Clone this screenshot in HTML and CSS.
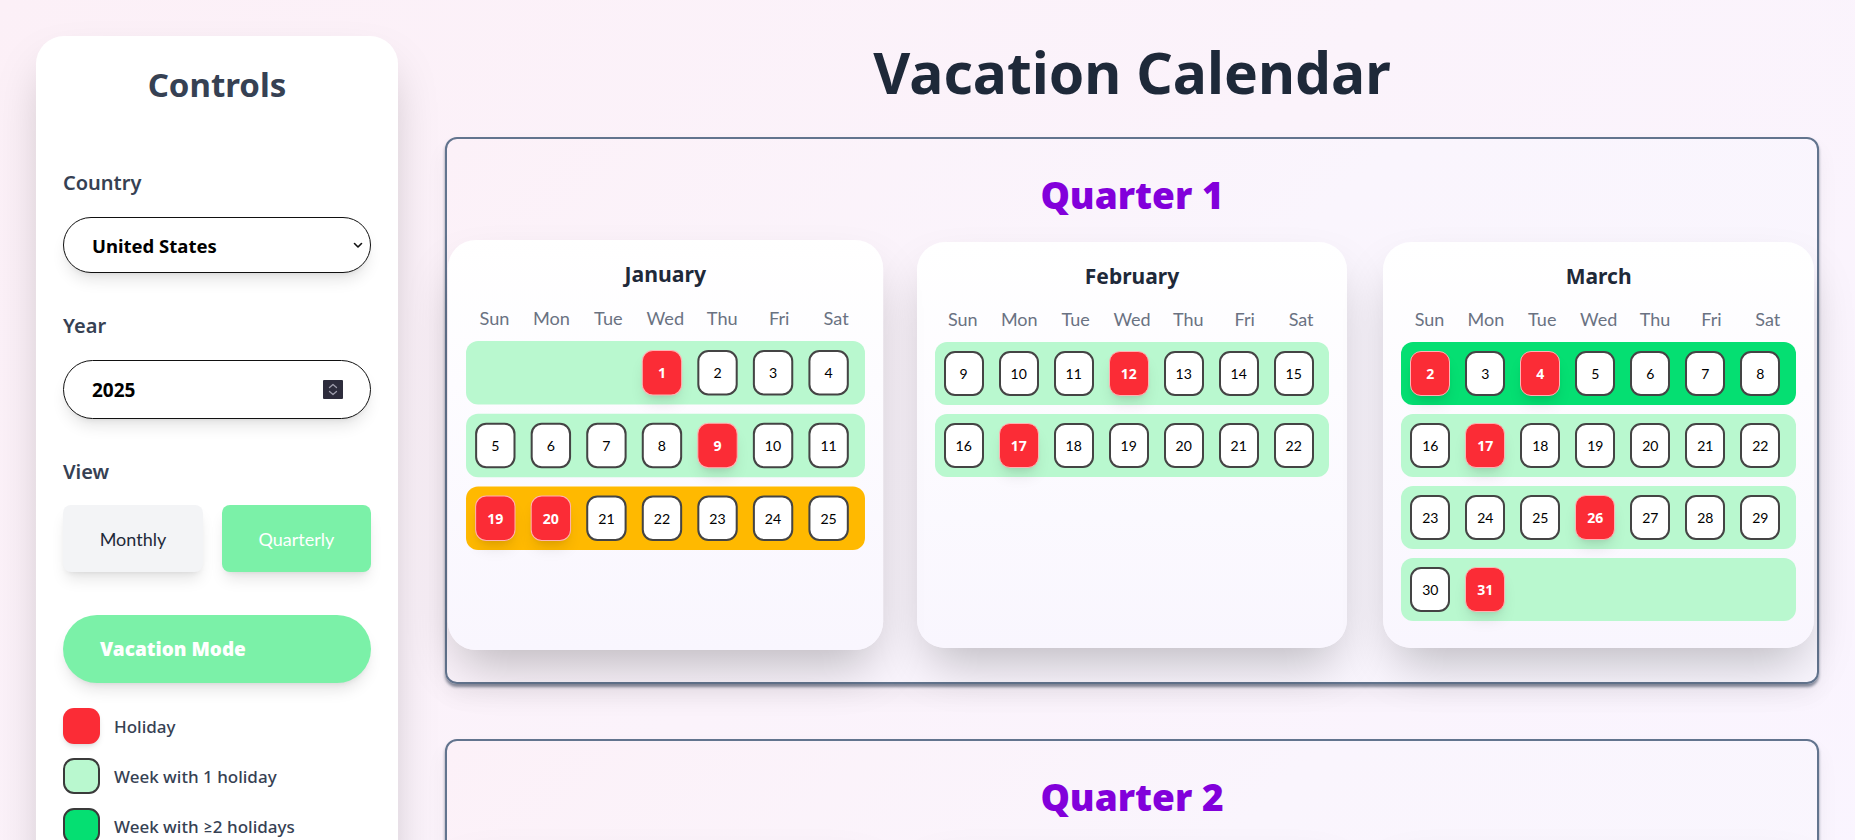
FILE: index.html
```html
<!DOCTYPE html>
<html lang="en">
<head>
<meta charset="utf-8">
<title>Vacation Calendar</title>
<link rel="stylesheet" href="styles.css">
</head>
<body>
<div class="app">
  <aside class="sidebar">
    <h2 class="sidebar-title">Controls</h2>

    <div class="field">
      <label class="field-label">Country</label>
      <div class="select">
        <span class="select-value">United States</span>
        <svg class="select-chevron" width="10" height="7" viewBox="0 0 10 7"><path d="M1.5 1.5 L5 5 L8.5 1.5" fill="none" stroke="#111" stroke-width="1.6" stroke-linecap="round" stroke-linejoin="round"/></svg>
      </div>
    </div>

    <div class="field">
      <label class="field-label">Year</label>
      <div class="number-input">
        <span class="number-value">2025</span>
        <span class="spinner">
          <svg width="20" height="19" viewBox="0 0 20 19"><rect width="20" height="19" rx="1" fill="#2d2c3c"/><path d="M6.5 7.5 L10 4.5 L13.5 7.5" fill="none" stroke="#9d9cab" stroke-width="1.3" stroke-linecap="round" stroke-linejoin="round"/><path d="M6.5 11.5 L10 14.5 L13.5 11.5" fill="none" stroke="#9d9cab" stroke-width="1.3" stroke-linecap="round" stroke-linejoin="round"/></svg>
        </span>
      </div>
    </div>

    <div class="field field-view">
      <label class="field-label">View</label>
      <div class="view-toggle">
        <button class="view-btn">Monthly</button>
        <button class="view-btn active">Quarterly</button>
      </div>
    </div>

    <button class="vacation-btn">Vacation Mode</button>

    <ul class="legend">
      <li class="legend-item"><span class="swatch swatch-holiday"></span>Holiday</li>
      <li class="legend-item"><span class="swatch swatch-one"></span>Week with 1 holiday</li>
      <li class="legend-item"><span class="swatch swatch-two"></span>Week with ≥2 holidays</li>
      <li class="legend-item"><span class="swatch swatch-long"></span>Long weekend</li>
    </ul>
  </aside>

  <main class="main">
    <h1 class="page-title">Vacation Calendar</h1>

    <section class="quarter">
      <h2 class="quarter-title">Quarter 1</h2>
      <div class="months">
        <div class="month hovered">
          <h3 class="month-title">January</h3>
          <div class="weekdays"><span>Sun</span><span>Mon</span><span>Tue</span><span>Wed</span><span>Thu</span><span>Fri</span><span>Sat</span></div>
          <div class="weeks">
            <div class="week one"><span class="day empty"></span><span class="day empty"></span><span class="day empty"></span><span class="day holiday">1</span><span class="day">2</span><span class="day">3</span><span class="day">4</span></div>
            <div class="week one"><span class="day">5</span><span class="day">6</span><span class="day">7</span><span class="day">8</span><span class="day holiday">9</span><span class="day">10</span><span class="day">11</span></div>
            <div class="week long"><span class="day holiday">19</span><span class="day holiday">20</span><span class="day">21</span><span class="day">22</span><span class="day">23</span><span class="day">24</span><span class="day">25</span></div>
          </div>
        </div>
        <div class="month">
          <h3 class="month-title">February</h3>
          <div class="weekdays"><span>Sun</span><span>Mon</span><span>Tue</span><span>Wed</span><span>Thu</span><span>Fri</span><span>Sat</span></div>
          <div class="weeks">
            <div class="week one"><span class="day">9</span><span class="day">10</span><span class="day">11</span><span class="day holiday">12</span><span class="day">13</span><span class="day">14</span><span class="day">15</span></div>
            <div class="week one"><span class="day">16</span><span class="day holiday">17</span><span class="day">18</span><span class="day">19</span><span class="day">20</span><span class="day">21</span><span class="day">22</span></div>
          </div>
        </div>
        <div class="month">
          <h3 class="month-title">March</h3>
          <div class="weekdays"><span>Sun</span><span>Mon</span><span>Tue</span><span>Wed</span><span>Thu</span><span>Fri</span><span>Sat</span></div>
          <div class="weeks">
            <div class="week two"><span class="day holiday">2</span><span class="day">3</span><span class="day holiday">4</span><span class="day">5</span><span class="day">6</span><span class="day">7</span><span class="day">8</span></div>
            <div class="week one"><span class="day">16</span><span class="day holiday">17</span><span class="day">18</span><span class="day">19</span><span class="day">20</span><span class="day">21</span><span class="day">22</span></div>
            <div class="week one"><span class="day">23</span><span class="day">24</span><span class="day">25</span><span class="day holiday">26</span><span class="day">27</span><span class="day">28</span><span class="day">29</span></div>
            <div class="week one"><span class="day">30</span><span class="day holiday">31</span></div>
          </div>
        </div>
      </div>
    </section>

    <section class="quarter">
      <h2 class="quarter-title">Quarter 2</h2>
      <div class="months">
        <div class="month">
          <h3 class="month-title">April</h3>
          <div class="weekdays"><span>Sun</span><span>Mon</span><span>Tue</span><span>Wed</span><span>Thu</span><span>Fri</span><span>Sat</span></div>
          <div class="weeks">
            <div class="week two"><span class="day">13</span><span class="day">14</span><span class="day">15</span><span class="day holiday">16</span><span class="day">17</span><span class="day holiday">18</span><span class="day">19</span></div>
            <div class="week long"><span class="day holiday">20</span><span class="day holiday">21</span><span class="day">22</span><span class="day">23</span><span class="day">24</span><span class="day">25</span><span class="day">26</span></div>
          </div>
        </div>
        <div class="month">
          <h3 class="month-title">May</h3>
          <div class="weekdays"><span>Sun</span><span>Mon</span><span>Tue</span><span>Wed</span><span>Thu</span><span>Fri</span><span>Sat</span></div>
          <div class="weeks">
            <div class="week one"><span class="day">4</span><span class="day">5</span><span class="day">6</span><span class="day">7</span><span class="day holiday">8</span><span class="day">9</span><span class="day">10</span></div>
            <div class="week one"><span class="day">25</span><span class="day holiday">26</span><span class="day">27</span><span class="day">28</span><span class="day">29</span><span class="day">30</span><span class="day">31</span></div>
          </div>
        </div>
        <div class="month">
          <h3 class="month-title">June</h3>
          <div class="weekdays"><span>Sun</span><span>Mon</span><span>Tue</span><span>Wed</span><span>Thu</span><span>Fri</span><span>Sat</span></div>
          <div class="weeks">
            <div class="week one"><span class="day">8</span><span class="day">9</span><span class="day">10</span><span class="day holiday">11</span><span class="day">12</span><span class="day">13</span><span class="day">14</span></div>
            <div class="week two"><span class="day">15</span><span class="day">16</span><span class="day">17</span><span class="day">18</span><span class="day holiday">19</span><span class="day holiday">20</span><span class="day">21</span></div>
          </div>
        </div>
      </div>
    </section>

    <section class="quarter">
      <h2 class="quarter-title">Quarter 3</h2>
      <div class="months">
        <div class="month">
          <h3 class="month-title">July</h3>
          <div class="weekdays"><span>Sun</span><span>Mon</span><span>Tue</span><span>Wed</span><span>Thu</span><span>Fri</span><span>Sat</span></div>
          <div class="weeks">
            <div class="week one"><span class="day empty"></span><span class="day empty"></span><span class="day">1</span><span class="day">2</span><span class="day">3</span><span class="day holiday">4</span><span class="day">5</span></div>
            <div class="week one"><span class="day">20</span><span class="day">21</span><span class="day">22</span><span class="day">23</span><span class="day holiday">24</span><span class="day">25</span><span class="day">26</span></div>
          </div>
        </div>
        <div class="month">
          <h3 class="month-title">August</h3>
          <div class="weekdays"><span>Sun</span><span>Mon</span><span>Tue</span><span>Wed</span><span>Thu</span><span>Fri</span><span>Sat</span></div>
          <div class="weeks">
            <div class="week one"><span class="day empty"></span><span class="day empty"></span><span class="day empty"></span><span class="day empty"></span><span class="day empty"></span><span class="day holiday">1</span><span class="day">2</span></div>
            <div class="week one"><span class="day">10</span><span class="day">11</span><span class="day">12</span><span class="day">13</span><span class="day">14</span><span class="day holiday">15</span><span class="day">16</span></div>
          </div>
        </div>
        <div class="month">
          <h3 class="month-title">September</h3>
          <div class="weekdays"><span>Sun</span><span>Mon</span><span>Tue</span><span>Wed</span><span>Thu</span><span>Fri</span><span>Sat</span></div>
          <div class="weeks">
            <div class="week one"><span class="day empty"></span><span class="day holiday">1</span><span class="day">2</span><span class="day">3</span><span class="day">4</span><span class="day">5</span><span class="day">6</span></div>
          </div>
        </div>
      </div>
    </section>

    <section class="quarter">
      <h2 class="quarter-title">Quarter 4</h2>
      <div class="months">
        <div class="month">
          <h3 class="month-title">October</h3>
          <div class="weekdays"><span>Sun</span><span>Mon</span><span>Tue</span><span>Wed</span><span>Thu</span><span>Fri</span><span>Sat</span></div>
          <div class="weeks">
            <div class="week one"><span class="day">12</span><span class="day holiday">13</span><span class="day">14</span><span class="day">15</span><span class="day">16</span><span class="day">17</span><span class="day">18</span></div>
          </div>
        </div>
        <div class="month">
          <h3 class="month-title">November</h3>
          <div class="weekdays"><span>Sun</span><span>Mon</span><span>Tue</span><span>Wed</span><span>Thu</span><span>Fri</span><span>Sat</span></div>
          <div class="weeks">
            <div class="week one"><span class="day">9</span><span class="day">10</span><span class="day holiday">11</span><span class="day">12</span><span class="day">13</span><span class="day">14</span><span class="day">15</span></div>
            <div class="week long"><span class="day">23</span><span class="day">24</span><span class="day">25</span><span class="day">26</span><span class="day holiday">27</span><span class="day holiday">28</span><span class="day">29</span></div>
          </div>
        </div>
        <div class="month">
          <h3 class="month-title">December</h3>
          <div class="weekdays"><span>Sun</span><span>Mon</span><span>Tue</span><span>Wed</span><span>Thu</span><span>Fri</span><span>Sat</span></div>
          <div class="weeks">
            <div class="week two"><span class="day">21</span><span class="day">22</span><span class="day">23</span><span class="day holiday">24</span><span class="day holiday">25</span><span class="day holiday">26</span><span class="day">27</span></div>
            <div class="week one"><span class="day">28</span><span class="day">29</span><span class="day">30</span><span class="day holiday">31</span></div>
          </div>
        </div>
      </div>
    </section>
  </main>
</div>
</body>
</html>
```

FILE: styles.css
```css
* { box-sizing: border-box; }

html, body { margin: 0; padding: 0; }

body {
  font-family: Lato, "Noto Sans", sans-serif;
  color: #1e2939;
  background: linear-gradient(135deg, #fcf0f7 0%, #fbf3fb 35%, #faf5ff 70%, #f9f6fe 100%);
  min-height: 100vh;
}

.app {
  display: flex;
  align-items: flex-start;
  gap: 47px;
  padding: 36px;
}

/* ---------- Sidebar ---------- */
.sidebar {
  flex: 0 0 362px;
  background: #ffffff;
  border-radius: 28px;
  padding: 29px 27px 40px;
  box-shadow: 0 25px 50px -12px rgba(0, 0, 0, 0.25);
}

.sidebar-title {
  margin: 0 0 64px;
  font-family: "Noto Sans", Lato, sans-serif;
  font-size: 33px;
  line-height: 40px;
  font-weight: 700;
  text-align: center;
  color: #364153;
}

.field { margin-bottom: 39px; }
.field-view { margin-bottom: 43px; }

.field-label {
  display: block;
  margin-bottom: 20px;
  font-family: "Noto Sans", Lato, sans-serif;
  font-size: 20px;
  line-height: 28px;
  font-weight: 600;
  color: #364153;
}

.field-view .field-label { margin-bottom: 19px; }

.select,
.number-input {
  display: flex;
  align-items: center;
  justify-content: space-between;
  border: 1px solid #111;
  border-radius: 9999px;
  background: #fff;
  box-shadow: 0 10px 15px -3px rgba(0, 0, 0, 0.1), 0 4px 6px -4px rgba(0, 0, 0, 0.1);
}

.select {
  height: 56px;
  padding: 0 7px 0 28px;
}

.number-input {
  height: 59px;
  padding: 0 27px 0 28px;
}

.select-value,
.number-value {
  font-family: "Noto Sans", Lato, sans-serif;
  font-size: 18.5px;
  font-weight: 700;
  color: #000;
}

.number-value { font-size: 19px; }

.select-chevron { display: block; }

.spinner { display: block; line-height: 0; }

.view-toggle {
  display: flex;
  gap: 19px;
}

.view-btn {
  flex: 1 1 auto;
  height: 67px;
  border: none;
  border-radius: 8px;
  background: #f3f4f6;
  color: #1e2939;
  font-family: inherit;
  font-size: 18px;
  font-weight: 400;
  box-shadow: 0 10px 15px -3px rgba(0, 0, 0, 0.1), 0 4px 6px -4px rgba(0, 0, 0, 0.1);
}

.view-btn.active {
  background: #7bf1a8;
  color: #ffffff;
}

.vacation-btn {
  display: block;
  width: 100%;
  height: 68px;
  border: none;
  border-radius: 9999px;
  background: #7bf1a8;
  color: #ffffff;
  text-align: left;
  padding: 0 0 0 37px;
  font-family: "Noto Sans", Lato, sans-serif;
  font-size: 19px;
  font-weight: 900;
  box-shadow: 0 10px 15px -3px rgba(0, 0, 0, 0.1), 0 4px 6px -4px rgba(0, 0, 0, 0.1);
}

.legend {
  list-style: none;
  margin: 25px 0 0;
  padding: 0;
  display: flex;
  flex-direction: column;
  gap: 14px;
}

.legend-item {
  display: flex;
  align-items: center;
  gap: 14px;
  font-family: "Noto Sans", Lato, sans-serif;
  font-size: 17px;
  font-weight: 500;
  color: #364153;
}

.swatch {
  flex: 0 0 37px;
  height: 36px;
  border-radius: 11px;
}

.swatch-holiday {
  background: #fb2c36;
  box-shadow: 0 4px 6px -1px rgba(0, 0, 0, 0.1), 0 2px 4px -2px rgba(0, 0, 0, 0.1);
}

.swatch-one { background: #b9f8cf; border: 2px solid #3a3a3a; }
.swatch-two { background: #05df72; border: 2px solid #3a3a3a; }
.swatch-long { background: #ffb900; border: 2px solid #3a3a3a; }

/* ---------- Main ---------- */
.main {
  flex: 1 1 auto;
  min-width: 0;
}

.page-title {
  margin: 6px 0 35px;
  font-family: "Noto Sans", Lato, sans-serif;
  font-size: 57px;
  line-height: 60px;
  font-weight: 700;
  text-align: center;
  color: #1e2939;
}

.quarter {
  border: 2px solid #62748e;
  border-radius: 12px;
  padding: 32px 3px 34px;
  margin-bottom: 55px;
  background: linear-gradient(135deg, #fcf1f8 0%, #faf5fd 50%, #f9f6fe 100%);
  box-shadow: 0 3px 3px rgba(60, 72, 95, 0.6), 0 12px 22px rgba(0, 0, 0, 0.05);
}

.quarter-title {
  margin: 0 0 23px;
  font-family: "Noto Sans", Lato, sans-serif;
  font-size: 37px;
  line-height: 48px;
  font-weight: 900;
  text-align: center;
  color: #8200db;
}

.months {
  display: grid;
  grid-template-columns: repeat(3, 1fr);
  gap: 36px;
}

.month {
  background: linear-gradient(180deg, #ffffff 0%, #fdfcff 35%, #f9f6fe 100%);
  border-radius: 28px;
  padding: 18px 18px 27px;
  box-shadow: 0 25px 50px -12px rgba(0, 0, 0, 0.25);
}

.month.hovered { transform: scale(1.01); }

.month-title {
  margin: 0 0 13px;
  font-family: "Noto Sans", Lato, sans-serif;
  font-size: 21px;
  line-height: 32px;
  font-weight: 700;
  text-align: center;
  color: #1e2939;
}

.weekdays {
  display: grid;
  grid-template-columns: repeat(7, 1fr);
  margin-bottom: 9px;
  font-size: 18px;
  line-height: 28px;
  text-align: center;
  color: #6a7282;
}

.weeks {
  display: flex;
  flex-direction: column;
  gap: 9px;
}

.week {
  display: flex;
  gap: 15px;
  padding: 9px;
  border-radius: 12px;
}

.week.one { background: #b9f8cf; }
.week.two { background: #05df72; }
.week.long { background: #ffb900; }

.day {
  flex: 0 0 40px;
  height: 45px;
  display: flex;
  align-items: center;
  justify-content: center;
  background: #ffffff;
  border: 2px solid #444;
  border-radius: 11px;
  font-size: 14px;
  color: #000;
}

.day.empty { visibility: hidden; }

.day.holiday {
  background: #fb2c36;
  border: 1px solid #ffb3b3;
  color: #ffffff;
  font-family: "Noto Sans", Lato, sans-serif;
  font-weight: 700;
  box-shadow: 0 10px 15px -3px rgba(0, 0, 0, 0.1), 0 4px 6px -4px rgba(0, 0, 0, 0.1);
}
```
